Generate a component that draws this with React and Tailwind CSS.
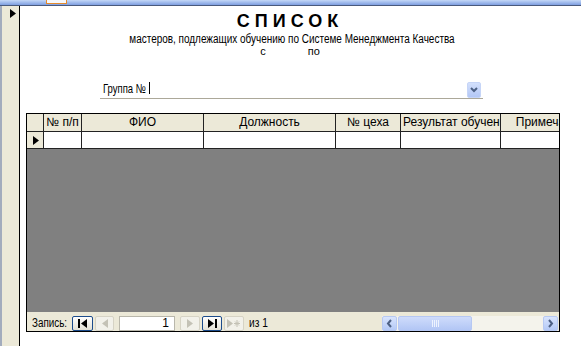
import React from "react";

function NavBtn({ w, active, children }) {
  return (
    <div
      className={
        "h-[15px] flex items-center justify-center rounded-[2px] border " +
        w +
        (active
          ? " border-[#1c4c8c] bg-gradient-to-b from-white to-[#e3e1d6]"
          : " border-[#d6d3c5] bg-[#f2f1ea]")
      }
    >
      {children}
    </div>
  );
}

function Tri({ dir, color }) {
  return (
    <svg width="6" height="9" viewBox="0 0 6 9">
      {dir === "l" ? <path d="M6 0 L0 4.5 L6 9 Z" fill={color} /> : <path d="M0 0 L6 4.5 L0 9 Z" fill={color} />}
    </svg>
  );
}

function ScrollBtn({ dir }) {
  return (
    <div className="w-[15px] h-[15px] rounded-[2px] border border-[#b7c9f2] bg-gradient-to-b from-[#d8e4fd] to-[#b4c9f6] flex items-center justify-center">
      <svg width="7" height="9" viewBox="0 0 7 9">
        <path d={dir === "l" ? "M5 1 L2 4.5 L5 8" : "M2 1 L5 4.5 L2 8"} stroke="#4d6185" strokeWidth="2" fill="none" />
      </svg>
    </div>
  );
}

const cols = [
  { w: "w-[38px]", t: "№ п/п" },
  { w: "w-[122px]", t: "ФИО" },
  { w: "w-[132px]", t: "Должность" },
  { w: "w-[65px]", t: "№ цеха" },
  { w: "w-[100px]", t: "Результат обучения", left: true },
  { w: "w-[100px]", t: "Примечание" },
];

export default function App() {
  return (
    <div className="w-[581px] h-[346px] overflow-hidden bg-white flex flex-col font-['Liberation_Sans',sans-serif] text-black">
      <div className="h-[5px] bg-gradient-to-b from-[#c5d8f7] to-[#7e9ee0] flex">
        <div className="ml-[46px] w-[21px] h-[4px] border border-t-0 border-[#e68b2c] bg-[#f6f8fc]" />
      </div>
      <div className="h-px bg-[#4a5a7c]" />
      <div className="flex flex-1">
        <div className="w-[20px] flex">
          <div className="w-[2px] bg-[#a3acbd]" />
          <div className="flex-1 bg-[#ece9d8] border-r border-black pt-[3px] pl-[8px]">
            <Tri dir="r" color="#000" />
          </div>
        </div>

        <div className="flex-1 flex flex-col">
          <div className="w-[540px] text-center">
            <div className="mt-[5px] text-[18px] leading-[21px] font-bold tracking-[5px]">СПИСОК</div>
            <div className="mt-[1px] text-[12px] leading-[13px] whitespace-nowrap pl-[4px]">
              <span className="inline-block scale-x-[0.83] origin-center">
                мастеров, подлежащих обучению по Системе Менеджмента Качества
              </span>
            </div>
            <div className="text-[11px] leading-[11px] flex justify-center gap-[42px]">
              <span>с</span>
              <span>по</span>
            </div>
          </div>

          <div className="ml-[80px] mt-[23px] w-[383px] h-[19px] border-b border-[#aca899] flex items-start">
            <span className="w-[48px] pl-[3px] pt-[1px] text-[13px] leading-[15px] whitespace-nowrap">
              <span className="inline-block scale-x-[0.73] origin-left">Группа №</span>
            </span>
            <span className="ml-[1px] mt-[2px] w-px h-[12px] bg-black" />
            <div className="ml-auto mr-[2px] mt-[2px] w-[14px] h-[16px] rounded-[2px] bg-gradient-to-b from-[#d3e0fc] to-[#b3c7f5] border border-[#c6d5f7] flex items-center justify-center">
              <svg width="8" height="6" viewBox="0 0 8 6">
                <path d="M1 1 L4 4 L7 1" stroke="#4d6185" strokeWidth="2" fill="none" />
              </svg>
            </div>
          </div>

          <div className="ml-[6px] mt-[14px] w-[534px] h-[219px] border border-black flex flex-col overflow-hidden">
            <div className="h-[18px] flex border-b border-[#222] bg-[#ece9d8] overflow-hidden">
              <div className="w-[17px] shrink-0 border-r border-[#222]" />
              {cols.map((c) => (
                <div
                  key={c.t}
                  className={
                    c.w +
                    " shrink-0 border-r border-[#222] text-[12px] leading-[17px] whitespace-nowrap overflow-hidden " +
                    (c.left ? "pl-[2px]" : "text-center")
                  }
                >
                  {c.t}
                </div>
              ))}
            </div>
            <div className="h-[17px] flex border-b border-[#222] bg-white overflow-hidden">
              <div className="w-[17px] shrink-0 border-r border-[#222] bg-[#ece9d8] flex items-center pl-[6px]">
                <Tri dir="r" color="#000" />
              </div>
              {cols.map((c) => (
                <div key={c.t} className={c.w + " shrink-0 border-r border-[#222]"} />
              ))}
            </div>
            <div className="flex-1 bg-[#808080]" />
            <div className="h-[19px] bg-[#ece9d8] flex items-end">
              <span className="w-[45px] shrink-0 pl-[5px] text-[12px] leading-[15px] whitespace-nowrap">
                <span className="inline-block scale-x-[0.82] origin-left">Запись:</span>
              </span>
              <NavBtn w="w-[21px]" active>
                <svg width="9" height="9" viewBox="0 0 9 9">
                  <rect x="0" y="0" width="2" height="9" fill="#000" />
                  <path d="M9 0 L3 4.5 L9 9 Z" fill="#000" />
                </svg>
              </NavBtn>
              <div className="ml-[2px]">
                <NavBtn w="w-[19px]">
                  <Tri dir="l" color="#c4c2b6" />
                </NavBtn>
              </div>
              <div className="ml-[5px] w-[56px] h-[15px] bg-white border border-[#b9b7ab] text-right pr-[5px] text-[12px] leading-[13px]">
                1
              </div>
              <div className="ml-[5px]">
                <NavBtn w="w-[20px]">
                  <Tri dir="r" color="#c4c2b6" />
                </NavBtn>
              </div>
              <div className="ml-[2px]">
                <NavBtn w="w-[20px]" active>
                  <svg width="9" height="9" viewBox="0 0 9 9">
                    <path d="M0 0 L6 4.5 L0 9 Z" fill="#000" />
                    <rect x="7" y="0" width="2" height="9" fill="#000" />
                  </svg>
                </NavBtn>
              </div>
              <div className="ml-[2px]">
                <NavBtn w="w-[20px]">
                  <svg width="14" height="9" viewBox="0 0 14 9">
                    <path d="M0 0 L6 4.5 L0 9 Z" fill="#c4c2b6" />
                    <path d="M10 1 V8 M7 4.5 H13 M8 2.5 L12 6.5 M12 2.5 L8 6.5" stroke="#c4c2b6" strokeWidth="1" />
                  </svg>
                </NavBtn>
              </div>
              <span className="ml-[5px] text-[12px] leading-[15px] whitespace-nowrap">
                <span className="inline-block scale-x-[0.85] origin-left">из 1</span>
              </span>
              <div className="ml-auto mr-[1px] w-[176px] h-[15px] flex bg-[#f4f3ec]">
                <ScrollBtn dir="l" />
                <div className="ml-px w-[74px] h-[15px] rounded-[2px] border border-[#b6c8f3] bg-gradient-to-b from-[#cfdcfb] to-[#b2c6f5] flex items-center justify-center gap-px">
                  <span className="w-px h-[7px] bg-[#eef3fe]" />
                  <span className="w-px h-[7px] bg-[#eef3fe]" />
                  <span className="w-px h-[7px] bg-[#eef3fe]" />
                  <span className="w-px h-[7px] bg-[#eef3fe]" />
                </div>
                <div className="flex-1" />
                <ScrollBtn dir="r" />
              </div>
            </div>
          </div>
        </div>
      </div>
    </div>
  );
}
